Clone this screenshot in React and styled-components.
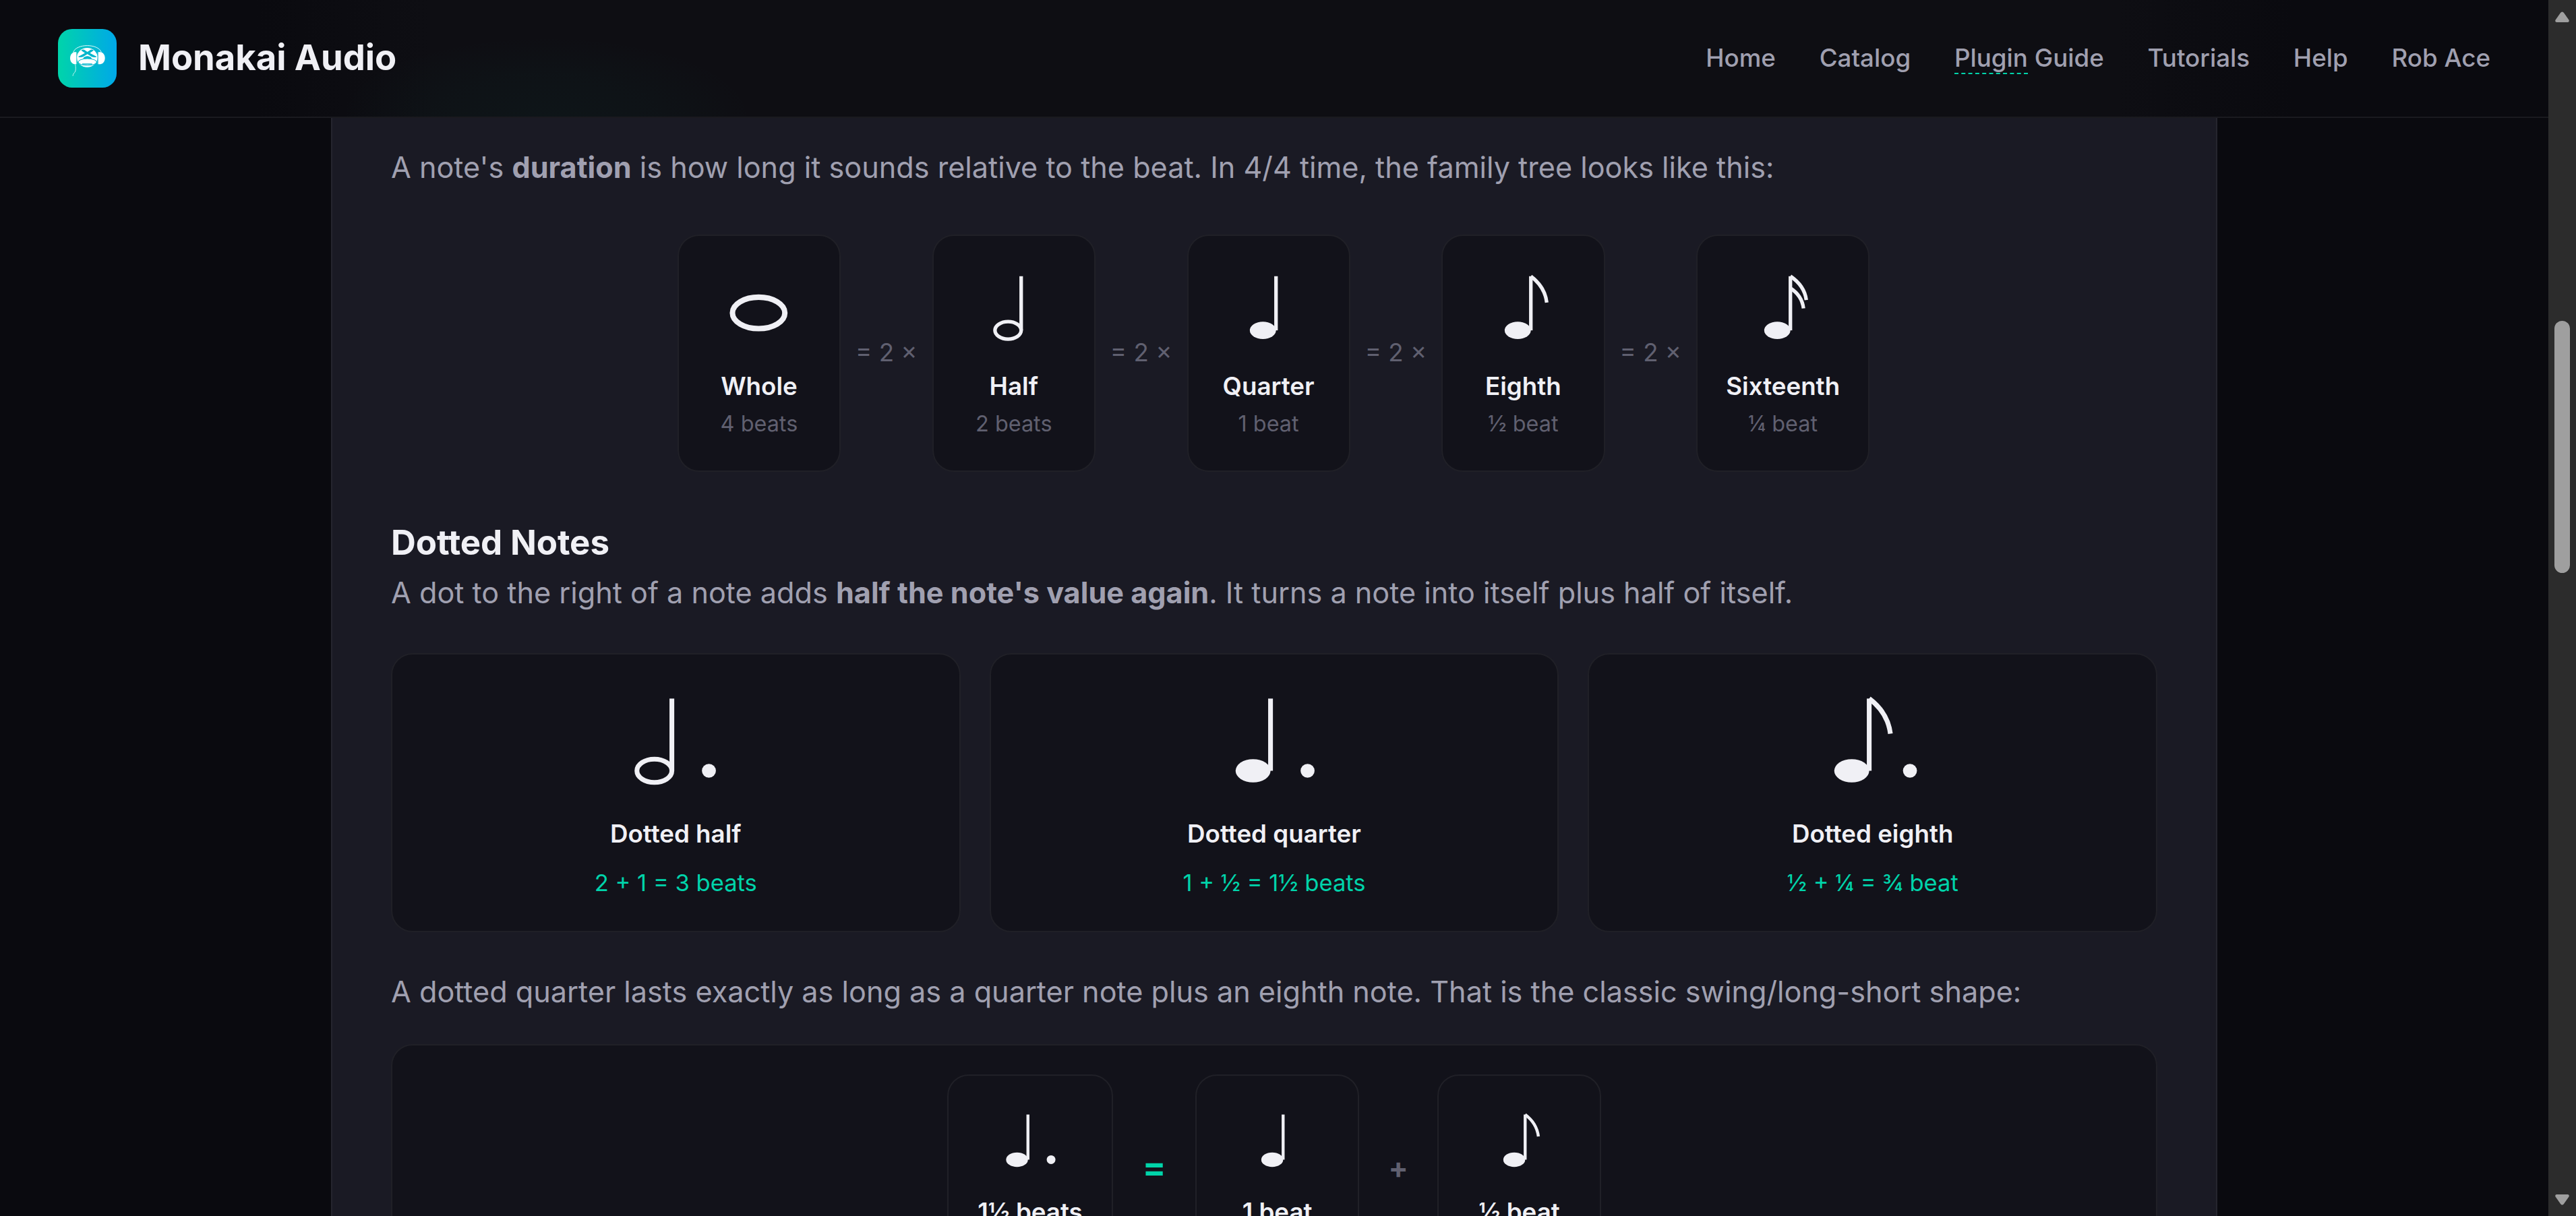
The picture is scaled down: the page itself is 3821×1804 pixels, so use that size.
import React from "react";
import styled, { createGlobalStyle } from "styled-components";

const navLinks = ["Home", "Catalog", "Plugin Guide", "Tutorials", "Help", "Rob Ace"];

const durations = [
  { kind: "whole", name: "Whole", beats: "4 beats" },
  { kind: "half", name: "Half", beats: "2 beats" },
  { kind: "quarter", name: "Quarter", beats: "1 beat" },
  { kind: "eighth", name: "Eighth", beats: "½ beat" },
  { kind: "sixteenth", name: "Sixteenth", beats: "¼ beat" },
];

const dottedNotes = [
  { kind: "half", name: "Dotted half", sum: "2 + 1 = 3 beats" },
  { kind: "quarter", name: "Dotted quarter", sum: "1 + ½ = 1½ beats" },
  { kind: "eighth", name: "Dotted eighth", sum: "½ + ¼ = ¾ beat" },
];

const Note = ({ kind, dotted, size }) => {
  // dotted notes sit further left to leave room for the dot
  const x = dotted ? 10.9 : 16.7;
  const stem = x + 7.5;
  if (kind === "whole") {
    return (
      <NoteSvg viewBox="0 0 40 42" $size={size}>
        <ellipse cx="19.8" cy="24" rx="15" ry="9" strokeWidth="3.1" />
      </NoteSvg>
    );
  }
  return (
    <NoteSvg viewBox="0 0 40 42" $size={size}>
      <ellipse
        cx={x}
        cy="34"
        rx="7.5"
        ry="5"
        {...(kind !== "half" && { fill: "#f0f0f5", stroke: "none" })}
      />
      <path d={`M${stem} 34V3`} />
      {kind === "eighth" && <path d={`M${stem} 3q8 6 9.1 15.1`} />}
      {kind === "sixteenth" && (
        <>
          <path d={`M${stem} 3q8 5.4 9.1 13.6`} />
          <path d={`M${stem} 9.8q6.6 4.2 7.5 11.6`} />
        </>
      )}
      {dotted && (
        <circle cx={kind === "eighth" ? 35.9 : 34.3} cy="34" r="3" fill="#f0f0f5" stroke="none" />
      )}
    </NoteSvg>
  );
};

const Logo = () => (
  <LogoBox>
    <svg width="87" height="87" viewBox="0 0 261 261" fill="none">
      <path d="M68 104C80 64 180 64 193 104" stroke="#e6fbfa" strokeWidth="3" />
      <ellipse cx="130" cy="127" rx="46" ry="43" fill="#fff" />
      <path d="M82 103h-9c-25 5-25 49 0 54h9zM179 103h10c27 4 27 50 0 54h-10z" fill="#fff" />
      <path d="M84 104v52M177 104v52" stroke="#6fcfdd" strokeWidth="2" />
      <path
        d="M103 95c7-5 13-4 18 0l10 7 10-7c5-4 11-5 18 0l-17 12 30 16c-2 4-14 4-22 1l-19-12-19 12c-8 3-20 3-22-1l30-16z"
        fill="#00b6cc"
      />
      <path d="M112 132c4-15 34-15 38 0z" fill="#00b6cc" />
      <path d="M122 121c4-4 14-4 18 0" stroke="#fff" strokeWidth="2" />
      <ellipse cx="131" cy="147" rx="41" ry="15" fill="#fff" stroke="#00b6cc" strokeWidth="3" />
      <path d="M108 156h44" stroke="#00b6cc" strokeWidth="4" />
      <path d="M77 157c2 12 3 24 0 32-3 6-10 9-11 20" stroke="#c9f5f0" strokeWidth="3" />
    </svg>
  </LogoBox>
);

const NoteRow = () => (
  <DurationRow>
    {durations.map((note, i) => (
      <React.Fragment key={note.kind}>
        {i > 0 && <Times>= 2 ×</Times>}
        <NoteCard>
          <Note kind={note.kind} size={2.592} />
          <NoteName $gap={39}>{note.name}</NoteName>
          <Beats>{note.beats}</Beats>
        </NoteCard>
      </React.Fragment>
    ))}
  </DurationRow>
);

const Scrollbar = () => (
  <ScrollTrack>
    <svg width="21" height="16" viewBox="0 0 21 16">
      <path d="M2 16Q-1 15 1 12L8 2Q10.500 -1 13 2L20 12Q22 15 19 16Z" fill="#9f9f9f" />
    </svg>
    <ScrollThumb />
    <svg width="21" height="16" viewBox="0 0 21 16">
      <path d="M2 0Q-1 1 1 4L8 14Q10.500 17 13 14L20 4Q22 1 19 0Z" fill="#9f9f9f" />
    </svg>
  </ScrollTrack>
);

export default function App() {
  return (
    <Window>
      <GlobalStyle />
      <Page>
        <Header>
          <Brand>
            <Logo />
            <BrandName>Monakai Audio</BrandName>
          </Brand>
          <Nav>
            {navLinks.map((link) =>
              link === "Plugin Guide" ? (
                <NavLink key={link}>
                  <Term>Plugin</Term> Guide
                </NavLink>
              ) : (
                <NavLink key={link}>{link}</NavLink>
              )
            )}
          </Nav>
        </Header>
        <Article>
          <Text $top={39}>
            A note's <b>duration</b> is how long it sounds relative to the beat. In 4/4 time, the
            family tree looks like this:
          </Text>
          <NoteRow />
          <Heading>Dotted Notes</Heading>
          <Text $top={10}>
            A dot to the right of a note adds <b>half the note's value again</b>. It turns a note
            into itself plus half of itself.
          </Text>
          <DottedGrid>
            {dottedNotes.map((note) => (
              <DottedCard key={note.kind}>
                <Note kind={note.kind} dotted size={3.456} />
                <NoteName $gap={43}>{note.name}</NoteName>
                <Sum>{note.sum}</Sum>
              </DottedCard>
            ))}
          </DottedGrid>
          <Text $top={54}>
            A dotted quarter lasts exactly as long as a quarter note plus an eighth note. That is
            the classic swing/long-short shape:
          </Text>
          <Equation>
            <EquationCard>
              <Note kind="quarter" dotted size={2.16} />
              <NoteName $gap={37}>1½ beats</NoteName>
            </EquationCard>
            <Equals>=</Equals>
            <EquationCard>
              <Note kind="quarter" size={2.16} />
              <NoteName $gap={37}>1 beat</NoteName>
            </EquationCard>
            <Plus>+</Plus>
            <EquationCard>
              <Note kind="eighth" size={2.16} />
              <NoteName $gap={37}>½ beat</NoteName>
            </EquationCard>
          </Equation>
        </Article>
      </Page>
      <Scrollbar />
    </Window>
  );
}

// Styles
const GlobalStyle = createGlobalStyle`
  * {
    box-sizing: border-box;
  }

  body {
    margin: 0;
    background: #0a0a0f;
    color: #f0f0f5;
    font-family: Inter, "Liberation Sans", sans-serif;
    overflow: hidden;
  }
`;

const Window = styled.div`
  display: flex;
  height: 1804px;
  overflow: hidden;
`;

const Page = styled.div`
  flex: 1;
  display: flex;
  flex-direction: column;
  align-items: center;
  min-width: 0;
  overflow: hidden;
`;

const Header = styled.header`
  width: 100%;
  height: 175px;
  flex-shrink: 0;
  display: flex;
  justify-content: space-between;
  align-items: center;
  padding: 0 86px;
  border-bottom: 2px solid #1a1a1f;
  background: radial-gradient(
      ellipse 310px 120px at 810px 173px,
      rgba(0, 212, 170, 0.035) 0%,
      rgba(0, 212, 170, 0.025) 50%,
      transparent 100%
    ),
    linear-gradient(
      to right,
      #0a0a0f 380px,
      #0e0e13 640px,
      #0e0e13 3140px,
      #0a0a0f 3400px
    );
`;

const Brand = styled.div`
  display: flex;
  align-items: center;
  gap: 32px;
`;

const LogoBox = styled.div`
  width: 87px;
  height: 87px;
  border-radius: 21px;
  background: linear-gradient(to right, #00d4aa, #00a8e8);
  overflow: hidden;

  svg {
    display: block;
  }
`;

const BrandName = styled.span`
  font-size: 52.5px;
  font-weight: 700;
  line-height: 64px;
  margin-bottom: 3px;
`;

const Nav = styled.nav`
  display: flex;
  gap: 64.8px;
  margin-bottom: 2px;
`;

const NavLink = styled.a`
  font-size: 36.72px;
  font-weight: 500;
  line-height: 45px;
  color: #a0a0b0;
  white-space: nowrap;
`;

const Term = styled.span`
  border-bottom: 2px dashed #00d4aa;
`;

const Article = styled.article`
  width: 2798px;
  flex: 1;
  padding: 0 87px;
  background: #1a1a24;
  border: solid #25252e;
  border-width: 0 2px;
`;

const Text = styled.p`
  margin: ${(props) => props.$top}px 0 0;
  font-size: 43.2px;
  line-height: 68px;
  color: #a0a0b0;
  white-space: nowrap;
`;

const Heading = styled.h3`
  margin: 75px 0 0;
  font-size: 51px;
  font-weight: 700;
  line-height: 60px;
  letter-spacing: -0.1px;
`;

const NoteSvg = styled.svg`
  display: block;
  flex-shrink: 0;
  width: ${(props) => props.$size * 40}px;
  height: ${(props) => props.$size * 42}px;
  fill: none;
  stroke: #f0f0f5;
  stroke-width: 2.05;
`;

const Card = styled.div`
  display: flex;
  flex-direction: column;
  align-items: center;
  background: #12121a;
  border: 2px solid #202027;
  border-radius: 32px;
`;

const DurationRow = styled.div`
  display: flex;
  justify-content: center;
  align-items: center;
  gap: 22px;
  margin-top: 66px;
  padding-right: 2px;
`;

const NoteCard = styled(Card)`
  min-width: 242.2px;
  height: 352px;
  padding: 52px 42px 0;
`;

const NoteName = styled.div`
  margin-top: ${(props) => props.$gap}px;
  font-size: 36.72px;
  font-weight: 600;
  line-height: 45px;
  white-space: nowrap;
`;

const Beats = styled.div`
  margin-top: 14px;
  font-size: 32.4px;
  line-height: 39px;
  color: #606070;
`;

const Times = styled.span`
  margin-bottom: 3px;
  font-size: 36.72px;
  line-height: 45px;
  color: #606070;
  white-space: nowrap;
`;

const DottedGrid = styled.div`
  display: grid;
  grid-template-columns: repeat(3, 1fr);
  gap: 43.2px;
  margin-top: 56px;
`;

const DottedCard = styled(Card)`
  height: 414px;
  padding-top: 55px;
`;

const Sum = styled.div`
  margin-top: 30px;
  font-size: 34.56px;
  line-height: 41px;
  color: #00d4aa;
`;

const Equation = styled.div`
  display: flex;
  justify-content: center;
  align-items: center;
  gap: 43.7px;
  margin-top: 44px;
  padding: 43px 0;
  background: #12121a;
  border: 2px solid #202027;
  border-radius: 32px;
`;

const EquationCard = styled(Card)`
  min-width: 242.4px;
  height: 276px;
  padding: 51px 43px 0;
`;

const Equals = styled.span`
  font-size: 51.84px;
  font-weight: 700;
  line-height: 62px;
  color: #00d4aa;
`;

const Plus = styled.span`
  font-size: 43.2px;
  font-weight: 700;
  line-height: 52px;
  color: #606070;
`;

const ScrollTrack = styled.div`
  width: 41px;
  display: flex;
  flex-direction: column;
  align-items: center;
  padding: 17px 0 16px;
  background: #2c2c2c;
`;

const ScrollThumb = styled.div`
  width: 23px;
  height: 374px;
  margin: 443px 0 auto;
  border-radius: 12px;
  background: #9f9f9f;
`;
